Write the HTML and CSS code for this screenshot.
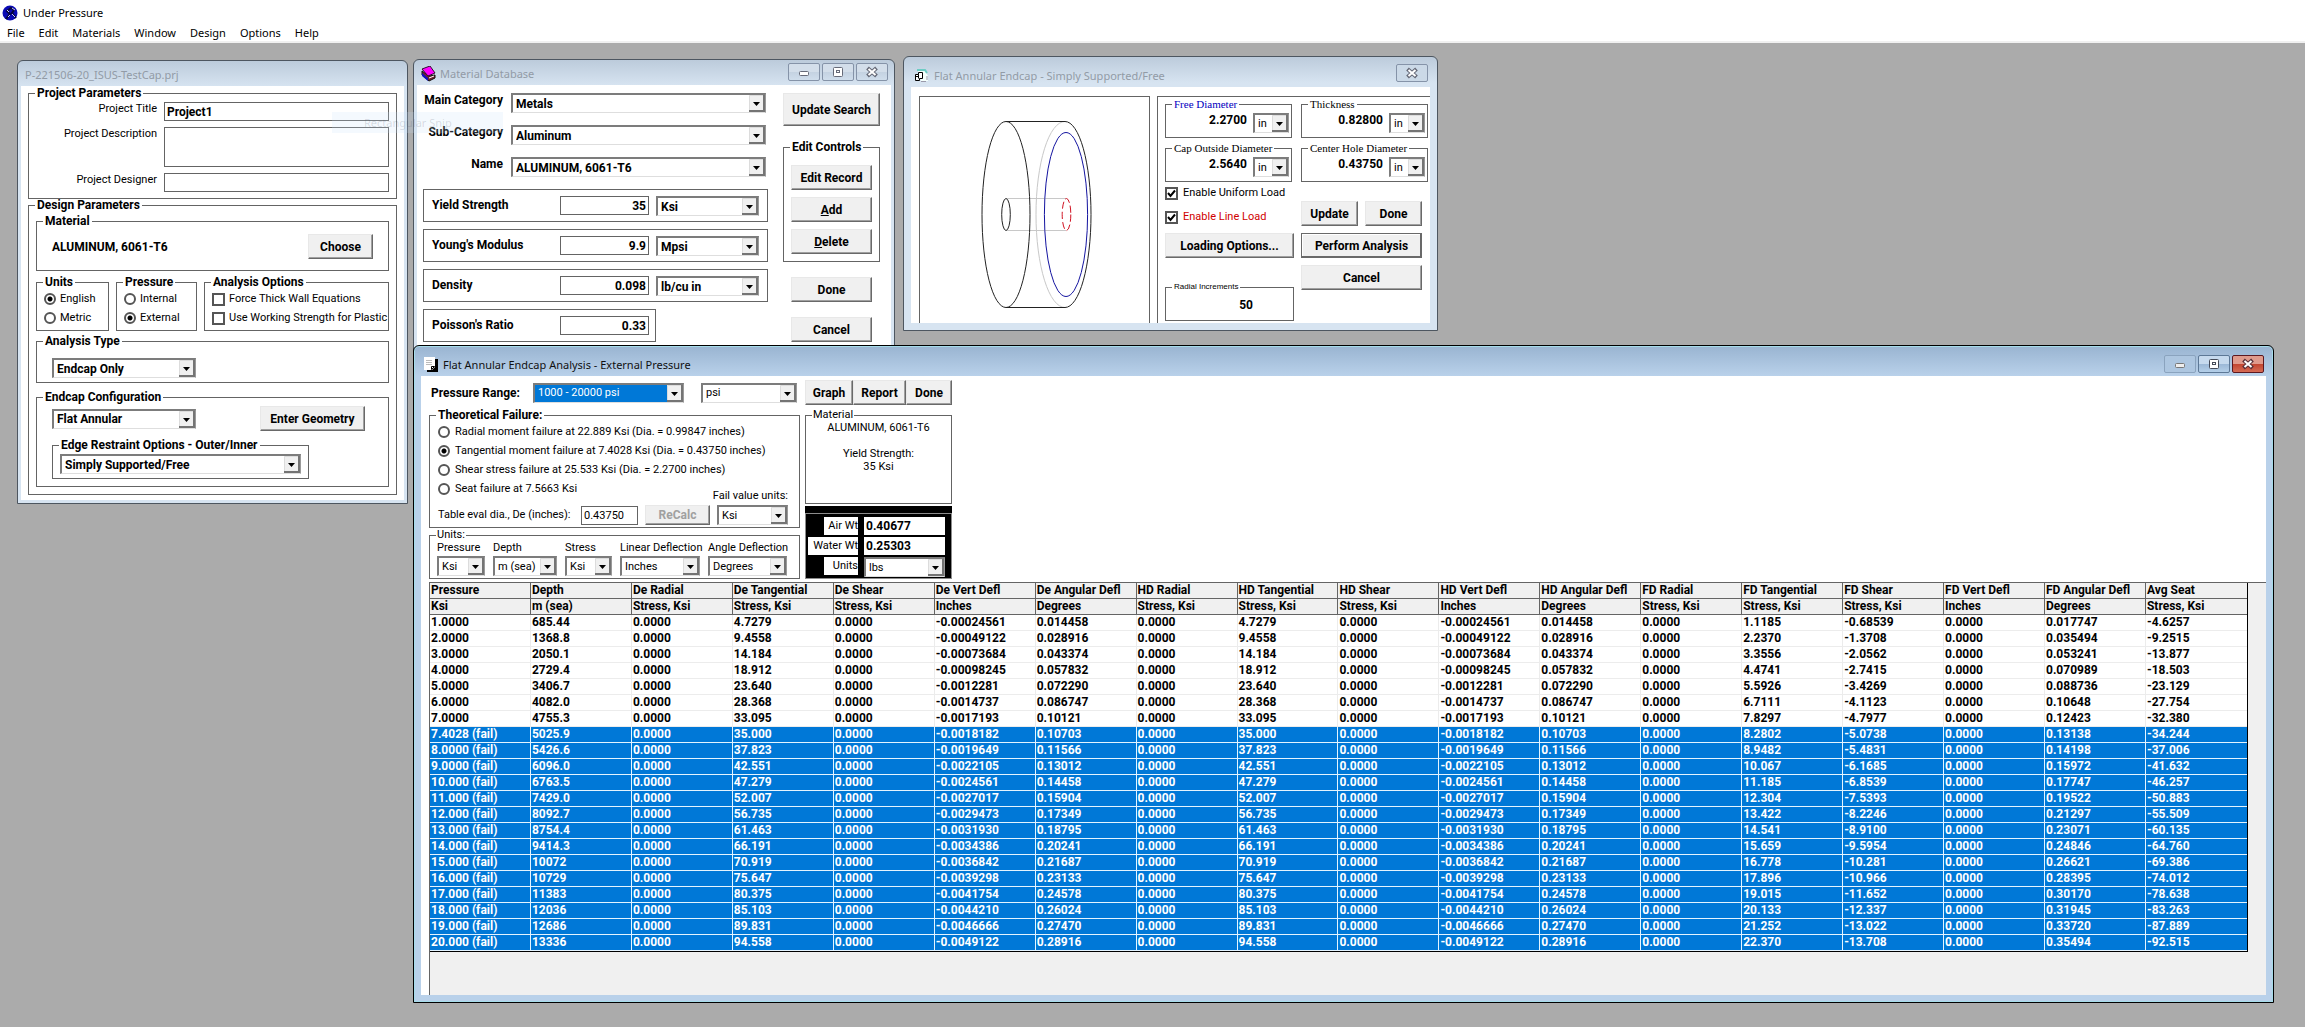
FILE: index.html
```html
<!DOCTYPE html>
<html lang="en">
<head>
<meta charset="utf-8">
<title>Under Pressure</title>
<link rel="stylesheet" href="styles.css">
</head>
<body>
<header class="app-bar">
  <div class="app-title">
    <svg width="16" height="16" viewBox="0 0 16 16" aria-hidden="true"><circle cx="8" cy="8" r="7.5" fill="#0a0ab4"/><path d="M4 14 8 9 5 6 9 3 12 5 10 8 14 13" fill="none" stroke="#06063c" stroke-width="2"/><path d="M10 3 13 5M5 5 7 7M10 9 13 12M6 12 8 10" stroke="#c8c8ff"/></svg>
    <span>Under Pressure</span>
  </div>
  <nav class="menu"><a href="#">File</a><a href="#">Edit</a><a href="#">Materials</a><a href="#">Window</a><a href="#">Design</a><a href="#">Options</a><a href="#">Help</a></nav>
</header>

<main class="desktop">
  <section class="window win-project">
    <div class="titlebar"><span>P-221506-20_ISUS-TestCap.prj</span></div>
    <div class="client project">
      <fieldset>
        <legend>Project Parameters</legend>
        <div class="project-fields">
          <label for="ptitle">Project Title</label><input id="ptitle" class="box bold" value="Project1">
          <label for="pdesc">Project Description</label><textarea id="pdesc" class="box"></textarea>
          <label for="pdes">Project Designer</label><input id="pdes" class="box">
        </div>
      </fieldset>
      <fieldset>
        <legend>Design Parameters</legend>
        <div class="design">
          <fieldset>
            <legend>Material</legend>
            <div class="material-row"><b>ALUMINUM, 6061-T6</b><button class="w-65">Choose</button></div>
          </fieldset>
          <div class="option-groups">
            <fieldset><legend>Units</legend>
              <div class="choices">
                <label><input type="radio" name="units" checked>English</label>
                <label><input type="radio" name="units">Metric</label>
              </div></fieldset>
            <fieldset><legend>Pressure</legend>
              <div class="choices">
                <label><input type="radio" name="pres">Internal</label>
                <label><input type="radio" name="pres" checked>External</label>
              </div></fieldset>
            <fieldset><legend>Analysis Options</legend>
              <div class="choices">
                <label><input type="checkbox">Force Thick Wall Equations</label>
                <label><input type="checkbox">Use Working Strength for Plastic</label>
              </div></fieldset>
          </div>
          <fieldset class="type">
            <legend>Analysis Type</legend>
            <div class="type-body"><select class="w-144 bold" aria-label="Analysis Type"><option>Endcap Only</option></select></div>
          </fieldset>
          <fieldset>
            <legend>Endcap Configuration</legend>
            <div class="endcap">
              <div class="endcap-row"><select class="w-144 bold" aria-label="Endcap Configuration"><option>Flat Annular</option></select><button class="w-105">Enter Geometry</button></div>
              <fieldset class="edge">
                <legend>Edge Restraint Options - Outer/Inner</legend>
                <div class="edge-body"><select class="bold" aria-label="Edge Restraint Options"><option>Simply Supported/Free</option></select></div>
              </fieldset>
            </div>
          </fieldset>
        </div>
      </fieldset>
    </div>
  </section>

  <section class="window win-material">
    <div class="titlebar">
      <svg width="15" height="16" viewBox="0 0 15 16" aria-hidden="true"><path d="M1 9 1 5 8 10 14 9 14 12 8 15z" fill="#702030" stroke="#111"/><path d="M1 7 7 12 7 15 1 10z" fill="#1010c0"/><path d="M1 3 9 0 14 7 7 10z" fill="#ff00ff" stroke="#301030"/><path d="M8 12 13 10" stroke="#fff"/></svg>
      <span>Material Database</span>
      <div class="controls">
        <button class="ctl" aria-label="Minimize"><svg width="12" height="12"><rect x="1.5" y="5.5" width="9" height="4" rx="1" fill="#fff" stroke="#666a78"/></svg></button>
        <button class="ctl" aria-label="Maximize"><svg width="12" height="12"><rect x="1.5" y="1.5" width="9" height="9" rx="1" fill="#fff" stroke="#666a78"/><rect x="4.5" y="4.5" width="3" height="2" fill="none" stroke="#666a78"/></svg></button>
        <button class="ctl" aria-label="Close"><svg width="12" height="12"><path d="M1.500 2 10.500 10M10.500 2 1.500 10" stroke="#666a78" stroke-width="4"/><path d="M2.500 3 9.500 9M9.500 3 2.500 9" stroke="#fff" stroke-width="2"/></svg></button>
      </div>
    </div>
    <div class="client material">
      <div class="mat-left">
        <div class="categories">
          <label for="mcat">Main Category</label><select id="mcat" class="bold"><option>Metals</option></select>
          <label for="scat">Sub-Category</label><select id="scat" class="bold"><option>Aluminum</option></select>
          <label for="mname">Name</label><select id="mname" class="bold"><option>ALUMINUM, 6061-T6</option></select>
        </div>
        <div class="property"><label for="ys">Yield Strength</label><input id="ys" class="box" value="35"><select class="bold" aria-label="Yield unit"><option>Ksi</option></select></div>
        <div class="property"><label for="ym">Young's Modulus</label><input id="ym" class="box" value="9.9"><select class="bold" aria-label="Modulus unit"><option>Mpsi</option></select></div>
        <div class="property"><label for="dn">Density</label><input id="dn" class="box" value="0.098"><select class="bold" aria-label="Density unit"><option>lb/cu in</option></select></div>
        <div class="property short"><label for="pr">Poisson's Ratio</label><input id="pr" class="box" value="0.33"></div>
      </div>
      <div class="mat-right">
        <button class="tall">Update Search</button>
        <fieldset>
          <legend>Edit Controls</legend>
          <div class="edit-controls"><button>Edit Record</button><button><u>A</u>dd</button><button><u>D</u>elete</button></div>
        </fieldset>
        <button class="w-81">Done</button>
        <button class="w-81">Cancel</button>
      </div>
    </div>
  </section>

  <div class="snip-ghost"><span>Rectangular Snip</span></div>

  <section class="window win-endcap">
    <div class="titlebar">
      <svg width="15" height="14" viewBox="0 0 15 14" aria-hidden="true"><path d="M4 2h7l3 5v5H7z" fill="#f4fffc"/><path d="M3 1h8l2 3" fill="none" stroke="#6dccc4" stroke-width="2"/><path d="M1.500 11.500v-6h3v-2h4v6h-3v2zM4.500 5.500v4M1.500 7.500h3" fill="#fff" stroke="#000"/><path d="M7 12.500h5M13 7v4" stroke="#99a"/></svg>
      <span>Flat Annular Endcap - Simply Supported/Free</span>
      <div class="controls">
        <button class="ctl" aria-label="Close"><svg width="12" height="12"><path d="M1.500 2 10.500 10M10.500 2 1.500 10" stroke="#666a78" stroke-width="4"/><path d="M2.500 3 9.500 9M9.500 3 2.500 9" stroke="#fff" stroke-width="2"/></svg></button>
      </div>
    </div>
    <div class="client geometry">
      <div class="drawing">
        <svg width="229" height="226" viewBox="920 97 229 226" fill="none" aria-label="Endcap drawing">
          <path d="M1065 121.500A29 93 0 0 0 1065 307.500" stroke="#c8c8c8"/>
          <path d="M1006 198.500H1066M1006 230.500H1066" stroke="#c8c8c8"/>
          <path d="M1006 121.500H1065A26 93 0 0 1 1065 307.500H1006" stroke="#222"/>
          <ellipse cx="1006" cy="214.500" rx="24" ry="93" stroke="#222"/>
          <ellipse cx="1006" cy="214.500" rx="4.300" ry="16" stroke="#222"/>
          <ellipse cx="1066" cy="214.500" rx="21.600" ry="82" stroke="#1414a0"/>
          <ellipse cx="1066.500" cy="214.500" rx="4.300" ry="16" stroke="#d01020" stroke-dasharray="7 3"/>
        </svg>
      </div>
      <div class="geo-panel">
        <div class="geo-col">
          <fieldset class="dim"><legend class="blue">Free Diameter</legend><div><input aria-label="Free Diameter" value="2.2700"><select aria-label="unit"><option>in</option></select></div></fieldset>
          <fieldset class="dim"><legend>Cap Outside Diameter</legend><div><input aria-label="Cap Outside Diameter" value="2.5640"><select aria-label="unit"><option>in</option></select></div></fieldset>
          <div class="loads">
            <label><input type="checkbox" checked>Enable Uniform Load</label>
            <label class="red"><input type="checkbox" checked>Enable Line Load</label>
          </div>
          <button>Loading Options...</button>
          <fieldset class="increments"><legend>Radial Increments</legend><div><input aria-label="Radial Increments" value="50"></div></fieldset>
        </div>
        <div class="geo-col">
          <fieldset class="dim"><legend>Thickness</legend><div><input aria-label="Thickness" value="0.82800"><select aria-label="unit"><option>in</option></select></div></fieldset>
          <fieldset class="dim"><legend>Center Hole Diameter</legend><div><input aria-label="Center Hole Diameter" value="0.43750"><select aria-label="unit"><option>in</option></select></div></fieldset>
          <div class="geo-buttons">
            <button>Update</button><button>Done</button>
            <button class="default">Perform Analysis</button>
            <button class="wide">Cancel</button>
          </div>
        </div>
      </div>
    </div>
  </section>

  <section class="window win-analysis active">
    <div class="titlebar">
      <svg width="14" height="15" viewBox="0 0 14 15" aria-hidden="true"><path d="M3 2h11v13H3z" fill="#000"/><path d="M0 0h11v10l-3 3H0z" fill="#fff"/><path d="M2 3.500h6M2 5.500h6M2 7.500h6" stroke="#bbb"/><path d="M7.500 9.500h3l-3 3z" fill="#fff" stroke="#000"/></svg>
      <span>Flat Annular Endcap Analysis - External Pressure</span>
      <div class="controls">
        <button class="ctl faded" aria-label="Minimize"><svg width="12" height="12"><rect x="1.500" y="5.500" width="9" height="4" rx="1" fill="#eee" stroke="#777"/></svg></button>
        <button class="ctl" aria-label="Maximize"><svg width="12" height="12"><rect x="1.500" y="1.500" width="9" height="9" rx="1" fill="#fff" stroke="#444a58"/><rect x="4.500" y="4.500" width="3" height="2" fill="none" stroke="#444a58"/></svg></button>
        <button class="ctl close" aria-label="Close"><svg width="12" height="12"><path d="M1.500 2 10.500 10M10.500 2 1.500 10" stroke="#5a3038" stroke-width="4"/><path d="M2.500 3 9.500 9M9.500 3 2.500 9" stroke="#fff" stroke-width="2"/></svg></button>
      </div>
    </div>
    <div class="client analysis">
      <div class="setup">
        <div class="setup-left">
          <div class="range"><label for="prange">Pressure Range:</label><select id="prange" class="picked"><option>1000 - 20000 psi</option></select><select class="w-96" aria-label="Range unit"><option>psi</option></select></div>
          <fieldset>
            <legend>Theoretical Failure:</legend>
            <div class="failure">
              <label><input type="radio" name="fail">Radial moment failure at 22.889 Ksi (Dia. = 0.99847 inches)</label>
              <label><input type="radio" name="fail" checked>Tangential moment failure at 7.4028 Ksi (Dia. = 0.43750 inches)</label>
              <label><input type="radio" name="fail">Shear stress failure at 25.533 Ksi (Dia. = 2.2700 inches)</label>
              <div class="seat"><label><input type="radio" name="fail">Seat failure at 7.5663 Ksi</label><label class="fvu" for="fvu">Fail value units:</label></div>
              <div class="eval"><label for="de">Table eval dia., De (inches):</label><input id="de" class="box" value="0.43750"><button disabled>ReCalc</button><select id="fvu"><option>Ksi</option></select></div>
            </div>
          </fieldset>
          <fieldset class="plain">
            <legend>Units:</legend>
            <div class="units">
              <label for="u1">Pressure</label><label for="u2">Depth</label><label for="u3">Stress</label><label for="u4">Linear Deflection</label><label for="u5">Angle Deflection</label>
              <select id="u1"><option>Ksi</option></select><select id="u2"><option>m (sea)</option></select><select id="u3"><option>Ksi</option></select><select id="u4"><option>Inches</option></select><select id="u5"><option>Degrees</option></select>
            </div>
          </fieldset>
        </div>
        <div class="setup-right">
          <div class="actions"><button>Graph</button><button>Report</button><button>Done</button></div>
          <fieldset class="plain">
            <legend>Material</legend>
            <div class="summary"><p>ALUMINUM, 6061-T6</p><p>Yield Strength:<br>35 Ksi</p></div>
          </fieldset>
          <div class="weights">
            <div class="weights-grid">
              <label class="narrow" for="aw">Air Wt</label><input id="aw" class="bold" value="0.40677">
              <label for="ww">Water Wt</label><input id="ww" class="bold" value="0.25303">
              <label class="narrow" for="wu">Units</label><select id="wu"><option>lbs</option></select>
            </div>
          </div>
        </div>
      </div>
      <div class="grid-area">
        <table>
          <thead>
            <tr><th>Pressure<th>Depth<th>De Radial<th>De Tangential<th>De Shear<th>De Vert Defl<th>De Angular Defl<th>HD Radial<th>HD Tangential<th>HD Shear<th>HD Vert Defl<th>HD Angular Defl<th>FD Radial<th>FD Tangential<th>FD Shear<th>FD Vert Defl<th>FD Angular Defl<th>Avg Seat</tr>
            <tr><th>Ksi<th>m (sea)<th>Stress, Ksi<th>Stress, Ksi<th>Stress, Ksi<th>Inches<th>Degrees<th>Stress, Ksi<th>Stress, Ksi<th>Stress, Ksi<th>Inches<th>Degrees<th>Stress, Ksi<th>Stress, Ksi<th>Stress, Ksi<th>Inches<th>Degrees<th>Stress, Ksi</tr>
          </thead>
          <tbody>
            <tr><td>1.0000<td>685.44<td>0.0000<td>4.7279<td>0.0000<td>-0.00024561<td>0.014458<td>0.0000<td>4.7279<td>0.0000<td>-0.00024561<td>0.014458<td>0.0000<td>1.1185<td>-0.68539<td>0.0000<td>0.017747<td>-4.6257</tr>
            <tr><td>2.0000<td>1368.8<td>0.0000<td>9.4558<td>0.0000<td>-0.00049122<td>0.028916<td>0.0000<td>9.4558<td>0.0000<td>-0.00049122<td>0.028916<td>0.0000<td>2.2370<td>-1.3708<td>0.0000<td>0.035494<td>-9.2515</tr>
            <tr><td>3.0000<td>2050.1<td>0.0000<td>14.184<td>0.0000<td>-0.00073684<td>0.043374<td>0.0000<td>14.184<td>0.0000<td>-0.00073684<td>0.043374<td>0.0000<td>3.3556<td>-2.0562<td>0.0000<td>0.053241<td>-13.877</tr>
            <tr><td>4.0000<td>2729.4<td>0.0000<td>18.912<td>0.0000<td>-0.00098245<td>0.057832<td>0.0000<td>18.912<td>0.0000<td>-0.00098245<td>0.057832<td>0.0000<td>4.4741<td>-2.7415<td>0.0000<td>0.070989<td>-18.503</tr>
            <tr><td>5.0000<td>3406.7<td>0.0000<td>23.640<td>0.0000<td>-0.0012281<td>0.072290<td>0.0000<td>23.640<td>0.0000<td>-0.0012281<td>0.072290<td>0.0000<td>5.5926<td>-3.4269<td>0.0000<td>0.088736<td>-23.129</tr>
            <tr><td>6.0000<td>4082.0<td>0.0000<td>28.368<td>0.0000<td>-0.0014737<td>0.086747<td>0.0000<td>28.368<td>0.0000<td>-0.0014737<td>0.086747<td>0.0000<td>6.7111<td>-4.1123<td>0.0000<td>0.10648<td>-27.754</tr>
            <tr><td>7.0000<td>4755.3<td>0.0000<td>33.095<td>0.0000<td>-0.0017193<td>0.10121<td>0.0000<td>33.095<td>0.0000<td>-0.0017193<td>0.10121<td>0.0000<td>7.8297<td>-4.7977<td>0.0000<td>0.12423<td>-32.380</tr>
          </tbody>
          <tbody class="fail">
            <tr><td>7.4028 (fail)<td>5025.9<td>0.0000<td>35.000<td>0.0000<td>-0.0018182<td>0.10703<td>0.0000<td>35.000<td>0.0000<td>-0.0018182<td>0.10703<td>0.0000<td>8.2802<td>-5.0738<td>0.0000<td>0.13138<td>-34.244</tr>
            <tr><td>8.0000 (fail)<td>5426.6<td>0.0000<td>37.823<td>0.0000<td>-0.0019649<td>0.11566<td>0.0000<td>37.823<td>0.0000<td>-0.0019649<td>0.11566<td>0.0000<td>8.9482<td>-5.4831<td>0.0000<td>0.14198<td>-37.006</tr>
            <tr><td>9.0000 (fail)<td>6096.0<td>0.0000<td>42.551<td>0.0000<td>-0.0022105<td>0.13012<td>0.0000<td>42.551<td>0.0000<td>-0.0022105<td>0.13012<td>0.0000<td>10.067<td>-6.1685<td>0.0000<td>0.15972<td>-41.632</tr>
            <tr><td>10.000 (fail)<td>6763.5<td>0.0000<td>47.279<td>0.0000<td>-0.0024561<td>0.14458<td>0.0000<td>47.279<td>0.0000<td>-0.0024561<td>0.14458<td>0.0000<td>11.185<td>-6.8539<td>0.0000<td>0.17747<td>-46.257</tr>
            <tr><td>11.000 (fail)<td>7429.0<td>0.0000<td>52.007<td>0.0000<td>-0.0027017<td>0.15904<td>0.0000<td>52.007<td>0.0000<td>-0.0027017<td>0.15904<td>0.0000<td>12.304<td>-7.5393<td>0.0000<td>0.19522<td>-50.883</tr>
            <tr><td>12.000 (fail)<td>8092.7<td>0.0000<td>56.735<td>0.0000<td>-0.0029473<td>0.17349<td>0.0000<td>56.735<td>0.0000<td>-0.0029473<td>0.17349<td>0.0000<td>13.422<td>-8.2246<td>0.0000<td>0.21297<td>-55.509</tr>
            <tr><td>13.000 (fail)<td>8754.4<td>0.0000<td>61.463<td>0.0000<td>-0.0031930<td>0.18795<td>0.0000<td>61.463<td>0.0000<td>-0.0031930<td>0.18795<td>0.0000<td>14.541<td>-8.9100<td>0.0000<td>0.23071<td>-60.135</tr>
            <tr><td>14.000 (fail)<td>9414.3<td>0.0000<td>66.191<td>0.0000<td>-0.0034386<td>0.20241<td>0.0000<td>66.191<td>0.0000<td>-0.0034386<td>0.20241<td>0.0000<td>15.659<td>-9.5954<td>0.0000<td>0.24846<td>-64.760</tr>
            <tr><td>15.000 (fail)<td>10072<td>0.0000<td>70.919<td>0.0000<td>-0.0036842<td>0.21687<td>0.0000<td>70.919<td>0.0000<td>-0.0036842<td>0.21687<td>0.0000<td>16.778<td>-10.281<td>0.0000<td>0.26621<td>-69.386</tr>
            <tr><td>16.000 (fail)<td>10729<td>0.0000<td>75.647<td>0.0000<td>-0.0039298<td>0.23133<td>0.0000<td>75.647<td>0.0000<td>-0.0039298<td>0.23133<td>0.0000<td>17.896<td>-10.966<td>0.0000<td>0.28395<td>-74.012</tr>
            <tr><td>17.000 (fail)<td>11383<td>0.0000<td>80.375<td>0.0000<td>-0.0041754<td>0.24578<td>0.0000<td>80.375<td>0.0000<td>-0.0041754<td>0.24578<td>0.0000<td>19.015<td>-11.652<td>0.0000<td>0.30170<td>-78.638</tr>
            <tr><td>18.000 (fail)<td>12036<td>0.0000<td>85.103<td>0.0000<td>-0.0044210<td>0.26024<td>0.0000<td>85.103<td>0.0000<td>-0.0044210<td>0.26024<td>0.0000<td>20.133<td>-12.337<td>0.0000<td>0.31945<td>-83.263</tr>
            <tr><td>19.000 (fail)<td>12686<td>0.0000<td>89.831<td>0.0000<td>-0.0046666<td>0.27470<td>0.0000<td>89.831<td>0.0000<td>-0.0046666<td>0.27470<td>0.0000<td>21.252<td>-13.022<td>0.0000<td>0.33720<td>-87.889</tr>
            <tr><td>20.000 (fail)<td>13336<td>0.0000<td>94.558<td>0.0000<td>-0.0049122<td>0.28916<td>0.0000<td>94.558<td>0.0000<td>-0.0049122<td>0.28916<td>0.0000<td>22.370<td>-13.708<td>0.0000<td>0.35494<td>-92.515</tr>
          </tbody>
        </table>
      </div>
    </div>
  </section>
</main>
</body>
</html>
```
FILE: styles.css
```css
* { box-sizing: border-box; }
html, body { height: 100%; }
body {
  margin: 0;
  display: flex;
  flex-direction: column;
  background: #ababab;
  color: #000;
  font: 11px/14px Roboto, "Liberation Sans", sans-serif;
  white-space: nowrap;
  overflow: hidden;
}
input, select, textarea, button { font: inherit; color: inherit; margin: 0; border-radius: 0; }
p { margin: 0; }
.bold, b, legend, button { font-weight: 700; font-size: 12px; }

/* Application title and menu */
.app-bar {
  flex: none;
  height: 43px;
  background: #fff;
  border-bottom: 2px solid #f0f0f0;
  font: 11px/16px "Noto Sans", "Open Sans", sans-serif;
}
.app-title { display: flex; align-items: center; gap: 5px; padding: 3px 2px 0; height: 22px; }
.menu { display: flex; gap: 14px; padding: 3px 7px 0; }
.menu a { color: #000; text-decoration: none; }

/* Child windows */
.desktop { position: relative; flex: 1; }
.window {
  position: absolute;
  display: flex;
  flex-direction: column;
  padding: 0 3px 3px;
  border: 1px solid #4d5660;
  border-radius: 6px 6px 0 0;
  background: linear-gradient(#bccbdb, #d7e4f1 26px);
}
.win-project { left: 17px; top: 17px; width: 391px; }
.win-material { left: 413px; top: 16px; width: 482px; }
.win-endcap { left: 903px; top: 13px; width: 535px; padding: 0 7px 7px; }
.win-analysis { left: 413px; top: 302px; right: 31px; bottom: 24px; padding: 0 7px 7px; }
.active {
  border-color: #000;
  background: linear-gradient(#99b4d1, #b9d1ea 30px, #b9d1ea);
  box-shadow: inset 0 0 0 1px #a6dcea;
}
.titlebar {
  display: flex;
  align-items: center;
  gap: 4px;
  height: 25px;
  padding: 2px 3px 0 4px;
  color: #929ba6;
  font: 11px/16px "Noto Sans", "Open Sans", sans-serif;
}
.win-endcap .titlebar, .win-analysis .titlebar { height: 30px; padding: 7px 2px 0 3px; gap: 5px; }
.active .titlebar { color: #111; }
.controls { display: flex; gap: 2px; margin-left: auto; align-self: flex-start; }
.win-material .controls { padding-top: 1px; }
.win-analysis .controls { padding-top: 2px; }
.ctl {
  display: flex;
  align-items: center;
  justify-content: center;
  width: 32px;
  height: 18px;
  padding: 0;
  border: 1px solid #8593a8;
  border-radius: 2px;
  background: linear-gradient(#d3deea 50%, #c4d2e1 50%, #d0deec);
  box-shadow: none;
}
.win-endcap .ctl { background: #cbd9e7; }
.active .ctl { background: linear-gradient(#c6daee 50%, #9bb8d6 50%, #b4cfe9); border-color: #5d7896; }
.active .faded { background: #adc6e0; border-color: #8aa3be; }
.active .close { background: linear-gradient(#e09a8c 50%, #c2442f 50%, #d56b55); border-color: #5c1820; }
.client { flex: 1; background: #fff; }

/* Group boxes */
fieldset { min-width: 0; margin: 0; padding: 0; border: 1px solid #646464; }
legend { margin-left: 6px; padding: 0 2px; line-height: 12px; }
.plain legend { font-weight: 400; font-size: 11px; padding: 0 1px; }

/* Controls */
button {
  height: 25px;
  padding: 0;
  background: #f0f0f0;
  border: 1px solid;
  border-color: #e8e8e8 #696969 #696969 #e8e8e8;
  box-shadow: inset -1px -1px #a0a0a0;
}
button:disabled { color: #a0a0a0; }
.box { border: 1px solid #646464; padding: 0 2px; height: 19px; background: #fff; resize: none; }
select {
  appearance: none;
  height: 20px;
  padding: 0 16px 0 3px;
  border: 2px solid;
  border-width: 2px 1px 1px 2px;
  border-color: #7c7c7c #9a9a9a #dedede #7c7c7c;
  background: #fff url("data:image/svg+xml,%3Csvg xmlns='http://www.w3.org/2000/svg' width='16' height='17'%3E%3Cpath d='M0 0h16v17H0z' fill='%23f0f0f0'/%3E%3Cpath d='M.5 17V.5H16' fill='none' stroke='%23dcdcdc'/%3E%3Cpath d='M15 0v16H0' fill='none' stroke='%23747474' stroke-width='2'/%3E%3Cpath d='M4 7h7l-3.500 4z'/%3E%3C/svg%3E") no-repeat right center;
}
input[type=radio], input[type=checkbox] {
  appearance: none;
  flex: none;
  width: 12px;
  height: 12px;
  border: 2px solid #555;
  background: #fff;
}
input[type=radio] { border-radius: 50%; }
input[type=radio]:checked { background: radial-gradient(circle, #000 2px, #fff 3px); }
input[type=checkbox] { width: 13px; height: 13px; }
input[type=checkbox]:checked { background: #fff url("data:image/svg+xml,%3Csvg xmlns='http://www.w3.org/2000/svg' width='9' height='9'%3E%3Cpath d='M1 4l2.500 3L8 1.500' fill='none' stroke='%23000' stroke-width='2'/%3E%3C/svg%3E"); }
.w-65 { width: 65px; }
.w-81 { width: 81px; }
.w-96 { width: 96px; }
.w-105 { width: 105px; }
.w-144 { width: 144px; }

/* Project window */
.project { padding: 1px 7px 5px; }
.project-fields {
  display: grid;
  grid-template-columns: 128px 1fr;
  gap: 6px 7px;
  padding: 3px 7px 6px 0;
  text-align: right;
}
.project-fields .box { width: 100%; }
.project-fields textarea { height: 40px; }
.design { padding: 4px 7px 7px; }
.material-row { display: flex; align-items: center; justify-content: space-between; padding: 7px 15px 11px; }
.option-groups { display: grid; grid-template-columns: 73px 81px 1fr; gap: 7px; margin: 5px 0 4px; }
.choices { display: grid; gap: 5px; padding: 4px 0 5px 7px; }
.choices label { display: flex; align-items: center; gap: 4px; }
.type { margin-bottom: 8px; }
.type-body { padding: 11px 15px 4px; }
.type-body select, .edge-body select { display: block; }
.endcap { padding: 3px 15px 7px; }
.endcap-row { display: flex; align-items: center; justify-content: space-between; padding-right: 8px; }
.edge { width: 257px; margin-top: 8px; }
.edge-body { padding: 3px 7px 4px; }
.edge-body select { width: 100%; }

/* Material database */
.material { display: flex; gap: 15px; padding: 8px 11px 12px 6px; }
.mat-left { width: 345px; font-weight: 700; font-size: 12px; }
.categories {
  display: grid;
  grid-template-columns: 80px 1fr;
  gap: 12px 8px;
  padding-right: 2px;
  margin-bottom: 12px;
  text-align: right;
}
.property {
  display: grid;
  grid-template-columns: 121px 89px 103px;
  column-gap: 7px;
  height: 33px;
  margin-bottom: 7px;
  padding: 6px 8px;
  border: 1px solid #646464;
  line-height: 18px;
}
.property .box { text-align: right; }
.short { width: 233px; margin: 0; }
.mat-right { display: flex; flex-direction: column; align-items: center; gap: 15px; width: 97px; }
.mat-right fieldset, .mat-right .tall { width: 100%; }
.tall { height: 33px; }
.edit-controls { display: grid; gap: 7px; padding: 12px 7px 7px; }

/* Remains of a fading menu entry */
.snip-ghost {
  position: absolute;
  left: 332px;
  top: 69px;
  width: 171px;
  height: 21px;
  padding-left: 32px;
  background: rgba(200, 225, 250, .2);
  color: rgba(60, 70, 90, .18);
  font: 11px/21px "Noto Sans", sans-serif;
}

/* Endcap geometry */
.geometry { display: grid; grid-template-columns: 231px 1fr; gap: 7px; padding: 9px 0 0 8px; }
.drawing { border: 1px solid #646464; border-bottom: 0; }
.drawing svg { display: block; }
.geo-panel {
  display: grid;
  grid-template-columns: 129px 127px;
  gap: 7px;
  padding: 1px 0 0 7px;
  border: solid #646464;
  border-width: 1px 0 0 1px;
}
.geo-col { display: flex; flex-direction: column; }
.geo-col legend { font: 11px/12px "Liberation Serif", serif; }
.dim { width: 127px; margin-bottom: 4px; }
.dim div { display: flex; gap: 6px; padding: 3px 2px 4px; }
.dim input, .increments input {
  flex: 1;
  min-width: 0;
  height: 14px;
  padding: 0;
  border: 0;
  text-align: right;
  font-weight: 700;
  font-size: 12px;
}
.dim select { flex: none; width: 36px; }
.blue { color: #0000c0; }
.red { color: #d00000; }
.loads { display: grid; gap: 10px; margin-bottom: 9px; }
.loads label { display: flex; align-items: center; gap: 5px; }
.increments { margin-top: 23px; }
.geo-col .increments legend { font: 8px/12px "Liberation Sans", sans-serif; }
.increments div { display: flex; padding: 5px 40px 8px 8px; }
.geo-buttons { display: grid; grid-template-columns: 1fr 1fr; gap: 7px; padding: 15px 6px 0 0; }
.geo-buttons .default, .geo-buttons .wide { grid-column: span 2; }
.default { border-color: #696969; box-shadow: inset -1px -1px #696969, inset 1px 1px #fff; }

/* Analysis window */
.analysis { display: flex; flex-direction: column; padding: 4px 0 0 8px; }
.setup { display: flex; gap: 5px; height: 202px; }
.setup-left { width: 371px; }
.range { display: flex; align-items: center; padding: 0 3px 0 2px; height: 25px; margin-bottom: 4px; }
.range label { width: 102px; font-weight: 700; font-size: 12px; }
.picked {
  width: 151px;
  margin-right: 17px;
  color: #fff;
  background-color: #0078d7;
}
.failure { padding: 1px 11px 2px 8px; }
.failure label { display: flex; align-items: center; gap: 5px; height: 19px; }
.seat { display: flex; justify-content: space-between; height: 24px; }
.seat .fvu { align-self: end; height: 14px; }
.eval { display: flex; align-items: center; margin-top: 2px; }
.eval label { width: 143px; }
.eval .box { width: 57px; margin-right: 7px; }
.eval button { width: 65px; height: 20px; margin-right: 7px; }
.eval select { width: 71px; }
.setup-left .plain { margin-top: 1px; }
.units { display: grid; grid-template-columns: 48px 64px 47px 80px 79px; gap: 1px 8px; padding: 0 7px 2px; }
.setup-right { width: 147px; }
.actions { display: grid; grid-template-columns: 48px 53px 46px; margin-bottom: 4px; }
.summary { height: 82px; text-align: center; line-height: 13px; }
.summary p { margin-bottom: 13px; }
.weights { height: 73px; margin-top: 2px; padding-top: 7px; background: #000; }
.weights-grid {
  display: grid;
  grid-template-columns: 50px 81px;
  align-content: start;
  gap: 2px 6px;
  height: 66px;
  padding: 3px 0 0 2px;
  border: 1px solid #8c8c8c;
}
.weights-grid label { overflow: hidden; height: 18px; background: #fff; text-align: right; line-height: 18px; }
.weights-grid .narrow { margin-left: 16px; }
.weights-grid input { width: 81px; height: 18px; padding: 0 2px; border: 0; }

.grid-area {
  flex: 1;
  border: solid #646464;
  border-width: 1px 0 0 1px;
  background: #f0f0f0;
}
table {
  width: calc(100% - 18px);
  table-layout: fixed;
  border-spacing: 0;
  border-right: 1px solid #000;
  border-bottom: 1px solid #000;
  font-weight: 700;
  font-size: 12px;
}
th, td {
  height: 16px;
  padding: 0 0 0 1px;
  border: solid #ececec;
  border-width: 0 1px 1px 0;
  line-height: 15px;
  text-align: left;
}
th { background: #f0f0f0; border-color: #646464; }
td { background: #fff; }
th:last-child, td:last-child { border-right: 0; }
.fail td { background: #0078d7; border-color: #e4f4ff; color: #fff; }
```
